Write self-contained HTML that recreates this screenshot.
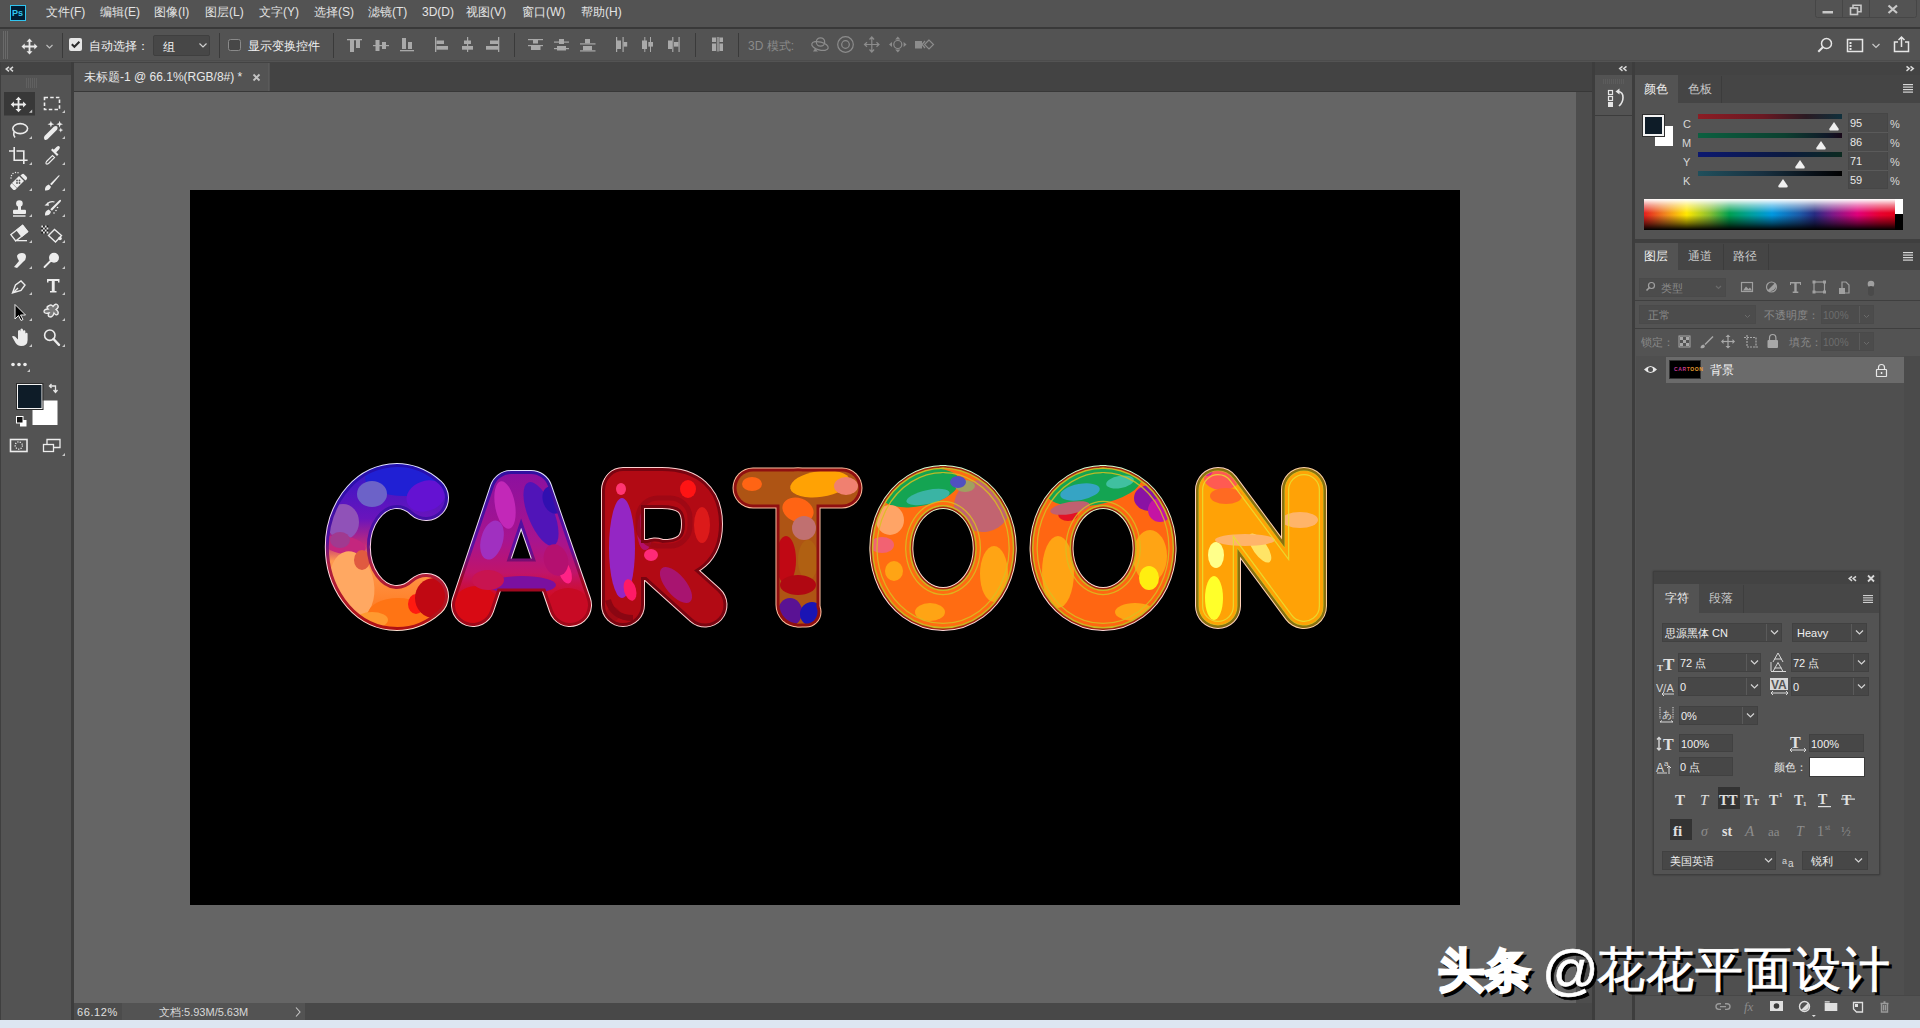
<!DOCTYPE html>
<html><head><meta charset="utf-8">
<style>
*{margin:0;padding:0;box-sizing:border-box}
html,body{width:1920px;height:1028px;overflow:hidden;background:#535353;font-family:"Liberation Sans",sans-serif;color:#e8e8e8}
.a{position:absolute}
.t{position:absolute;white-space:nowrap;font-size:12px;line-height:14px}
svg{position:absolute;overflow:visible}
</style></head>
<body>
<!-- MENU BAR -->
<div class="a" style="left:0;top:0;width:1920px;height:28px;background:#535353"></div>
<div class="a" style="left:0;top:27px;width:1920px;height:2px;background:#393939"></div>
<div class="a" style="left:10px;top:5px;width:16px;height:16px;background:#001d34;border:1px solid #31c5f0"></div>
<div class="t" style="left:12px;top:6px;font-size:9px;color:#31c5f0;font-weight:bold">Ps</div>
<div class="t" style="left:46px;top:5px;color:#e4e4e4">文件(F)</div><div class="t" style="left:100px;top:5px;color:#e4e4e4">编辑(E)</div><div class="t" style="left:154px;top:5px;color:#e4e4e4">图像(I)</div><div class="t" style="left:205px;top:5px;color:#e4e4e4">图层(L)</div><div class="t" style="left:259px;top:5px;color:#e4e4e4">文字(Y)</div><div class="t" style="left:314px;top:5px;color:#e4e4e4">选择(S)</div><div class="t" style="left:368px;top:5px;color:#e4e4e4">滤镜(T)</div><div class="t" style="left:422px;top:5px;color:#e4e4e4">3D(D)</div><div class="t" style="left:466px;top:5px;color:#e4e4e4">视图(V)</div><div class="t" style="left:522px;top:5px;color:#e4e4e4">窗口(W)</div><div class="t" style="left:581px;top:5px;color:#e4e4e4">帮助(H)</div>

<!-- OPTIONS BAR -->
<div class="a" style="left:0;top:29px;width:1920px;height:33px;background:#535353"></div>

<!-- TAB ROW -->
<div class="a" style="left:74px;top:62px;width:1518px;height:30px;background:#434343"></div>
<div class="a" style="left:74px;top:63px;width:196px;height:29px;background:#535353"></div>
<div class="a" style="left:73px;top:91px;width:1519px;height:1px;background:#383838"></div><div class="a" style="left:268px;top:63px;width:1px;height:28px;background:#5a5a5a"></div><div class="a" style="left:0;top:60px;width:1920px;height:1px;background:#4c4c4c"></div>

<!-- PASTEBOARD -->
<div class="a" style="left:74px;top:92px;width:1502px;height:911px;background:#656565"></div>
<div class="a" style="left:1576px;top:92px;width:16px;height:911px;background:#4d4d4d"></div>
<div class="a" style="left:190px;top:190px;width:1270px;height:715px;background:#000"></div>

<!-- LETTERS --><svg width="1920" height="1028" style="left:0;top:0" viewBox="0 0 1920 1028"><defs>
<linearGradient id="gC" x1="0" y1="0" x2="0" y2="1"><stop offset="0" stop-color="#e0e0ff"/><stop offset=".5" stop-color="#ffd0e8"/><stop offset="1" stop-color="#ffe0d0"/></linearGradient>
<linearGradient id="gA" x1="0" y1="0" x2="0" y2="1"><stop offset="0" stop-color="#e0e0ff"/><stop offset="1" stop-color="#ffd8d8"/></linearGradient>
<linearGradient id="gO" x1="0" y1="0" x2="0" y2="1"><stop offset="0" stop-color="#d0ffd0"/><stop offset=".5" stop-color="#ffe0c0"/><stop offset="1" stop-color="#ffd8d8"/></linearGradient>
<linearGradient id="dC" gradientUnits="userSpaceOnUse" x1="0" y1="463" x2="0" y2="632"><stop offset="0" stop-color="#2010b0"/><stop offset=".45" stop-color="#5010a0"/><stop offset=".6" stop-color="#b02040"/><stop offset="1" stop-color="#b01010"/></linearGradient>
<linearGradient id="bC" gradientUnits="userSpaceOnUse" x1="0" y1="463" x2="0" y2="632"><stop offset="0" stop-color="#3018c8"/><stop offset=".33" stop-color="#6a14bc"/><stop offset=".48" stop-color="#c02a7a"/><stop offset=".58" stop-color="#ff9a50"/><stop offset="1" stop-color="#ff7010"/></linearGradient>
<linearGradient id="bA" gradientUnits="userSpaceOnUse" x1="0" y1="470" x2="0" y2="628"><stop offset="0" stop-color="#8a10a0"/><stop offset=".45" stop-color="#a8148e"/><stop offset=".65" stop-color="#c0146a"/><stop offset=".8" stop-color="#d00c24"/><stop offset="1" stop-color="#c80a18"/></linearGradient>
<linearGradient id="dA" gradientUnits="userSpaceOnUse" x1="0" y1="470" x2="0" y2="628"><stop offset="0" stop-color="#3010a0"/><stop offset=".5" stop-color="#6010a0"/><stop offset=".7" stop-color="#a00820"/><stop offset="1" stop-color="#a00818"/></linearGradient>
<linearGradient id="gN" x1="0" y1="0" x2="1" y2="0"><stop offset="0" stop-color="#ffd0c0"/><stop offset="1" stop-color="#ffd0a0"/></linearGradient>
<mask id="mC" maskUnits="userSpaceOnUse" x="300" y="440" width="1060" height="220"><path d="M426 498 A49 61 0 1 0 426 596" fill="none" stroke="#fff" stroke-width="38" stroke-linecap="round" stroke-linejoin="round"/></mask>
<mask id="mA" maskUnits="userSpaceOnUse" x="300" y="440" width="1060" height="220"><path d="M473 605 L511 492 L531 492 L570 605" fill="none" stroke="#fff" stroke-width="36" stroke-linecap="round" stroke-linejoin="round"/><path d="M490 575 L553 575" fill="none" stroke="#fff" stroke-width="27" stroke-linecap="round" stroke-linejoin="round"/></mask>
<mask id="mR" maskUnits="userSpaceOnUse" x="300" y="440" width="1060" height="220"><path d="M623 490 L623 605" fill="none" stroke="#fff" stroke-width="36" stroke-linecap="round" stroke-linejoin="round"/><path d="M623 488 L662 488 Q702 488 702 524 Q702 560 662 560 L623 560" fill="none" stroke="#fff" stroke-width="34" stroke-linecap="round" stroke-linejoin="round"/><path d="M655 560 L705 605" fill="none" stroke="#fff" stroke-width="37" stroke-linecap="round" stroke-linejoin="round"/></mask>
<mask id="mT" maskUnits="userSpaceOnUse" x="300" y="440" width="1060" height="220"><path d="M753 488 L842 488" fill="none" stroke="#fff" stroke-width="33" stroke-linecap="round" stroke-linejoin="round"/><path d="M798 490 L798 605" fill="none" stroke="#fff" stroke-width="37" stroke-linecap="round" stroke-linejoin="round"/><path d="M800 612 L806 612" fill="none" stroke="#fff" stroke-width="23" stroke-linecap="round" stroke-linejoin="round"/></mask>
<mask id="mO1" maskUnits="userSpaceOnUse" x="300" y="440" width="1060" height="220"><path d="M943 487 A51.7 61 0 1 0 943.1 487" fill="none" stroke="#fff" stroke-width="36" stroke-linecap="round" stroke-linejoin="round"/></mask>
<mask id="rO1" maskUnits="userSpaceOnUse" x="300" y="440" width="1060" height="220"><path d="M943 487 A51.7 61 0 1 0 943.1 487" fill="none" stroke="#fff" stroke-width="30" stroke-linecap="round" stroke-linejoin="round"/><path d="M943 487 A51.7 61 0 1 0 943.1 487" fill="none" stroke="#000" stroke-width="27.5" stroke-linecap="round" stroke-linejoin="round"/></mask>
<mask id="mO2" maskUnits="userSpaceOnUse" x="300" y="440" width="1060" height="220"><path d="M1103 487 A51.5 61 0 1 0 1103.1 487" fill="none" stroke="#fff" stroke-width="36" stroke-linecap="round" stroke-linejoin="round"/></mask>
<mask id="rO2" maskUnits="userSpaceOnUse" x="300" y="440" width="1060" height="220"><path d="M1103 487 A51.5 61 0 1 0 1103.1 487" fill="none" stroke="#fff" stroke-width="30" stroke-linecap="round" stroke-linejoin="round"/><path d="M1103 487 A51.5 61 0 1 0 1103.1 487" fill="none" stroke="#000" stroke-width="27.5" stroke-linecap="round" stroke-linejoin="round"/></mask>
<mask id="mN" maskUnits="userSpaceOnUse" x="300" y="440" width="1060" height="220"><path d="M1218 606 L1218 490 L1304 606 L1304 490" fill="none" stroke="#fff" stroke-width="38" stroke-linecap="round" stroke-linejoin="round"/></mask>
<mask id="rN" maskUnits="userSpaceOnUse" x="300" y="440" width="1060" height="220"><path d="M1218 606 L1218 490 L1304 606 L1304 490" fill="none" stroke="#fff" stroke-width="32" stroke-linecap="round" stroke-linejoin="round"/><path d="M1218 606 L1218 490 L1304 606 L1304 490" fill="none" stroke="#000" stroke-width="29.5" stroke-linecap="round" stroke-linejoin="round"/></mask>
</defs>
<g id="LC"><path d="M426 498 A49 61 0 1 0 426 596" fill="none" stroke="url(#gC)" stroke-width="46" stroke-linecap="round" stroke-linejoin="round"/><path d="M426 498 A49 61 0 1 0 426 596" fill="none" stroke="url(#dC)" stroke-width="44" stroke-linecap="round" stroke-linejoin="round"/><g mask="url(#mC)"><rect x="300" y="440" width="1060" height="220" fill="url(#bC)"/><ellipse cx="405" cy="478" rx="40" ry="18" fill="#2020d4"/><ellipse cx="372" cy="494" rx="15" ry="13" fill="#6c62c8"/><ellipse cx="426" cy="496" rx="20" ry="15" fill="#6412d2" transform="rotate(-20 426 496)"/><ellipse cx="343" cy="522" rx="16" ry="18" fill="#9052b8"/><ellipse cx="344" cy="545" rx="22" ry="9" fill="#c4267e" transform="rotate(10 344 545)"/><ellipse cx="352" cy="585" rx="22" ry="34" fill="#ffa862" transform="rotate(-10 352 585)"/><ellipse cx="398" cy="614" rx="30" ry="16" fill="#ff7414"/><ellipse cx="416" cy="604" rx="8" ry="10" fill="#ff1a10"/><ellipse cx="434" cy="598" rx="19" ry="20" fill="#c00812"/><ellipse cx="372" cy="620" rx="16" ry="8" fill="#ff9a30"/><ellipse cx="362" cy="560" rx="8" ry="10" fill="#e05a40"/><ellipse cx="340" cy="540" rx="10" ry="8" fill="#a03a90"/></g></g>
<g id="LA"><path d="M473 605 L511 492 L531 492 L570 605" fill="none" stroke="url(#gA)" stroke-width="44" stroke-linecap="round" stroke-linejoin="round"/><path d="M490 575 L553 575" fill="none" stroke="url(#gA)" stroke-width="35" stroke-linecap="round" stroke-linejoin="round"/><path d="M473 605 L511 492 L531 492 L570 605" fill="none" stroke="url(#dA)" stroke-width="42" stroke-linecap="round" stroke-linejoin="round"/><path d="M490 575 L553 575" fill="none" stroke="url(#dA)" stroke-width="33" stroke-linecap="round" stroke-linejoin="round"/><g mask="url(#mA)"><rect x="300" y="440" width="1060" height="220" fill="url(#bA)"/><ellipse cx="541" cy="514" rx="13" ry="34" fill="#5014b8" transform="rotate(-22 541 514)"/><ellipse cx="553" cy="500" rx="10" ry="14" fill="#3010b0" transform="rotate(-20 553 500)"/><ellipse cx="505" cy="505" rx="10" ry="24" fill="#c228b8" transform="rotate(-10 505 505)"/><ellipse cx="492" cy="540" rx="11" ry="20" fill="#a030c0" transform="rotate(15 492 540)"/><ellipse cx="522" cy="585" rx="34" ry="9" fill="#7a10a0"/><ellipse cx="565" cy="572" rx="6" ry="12" fill="#ff2286" transform="rotate(-20 565 572)"/><ellipse cx="476" cy="608" rx="24" ry="22" fill="#d80a14"/><ellipse cx="568" cy="608" rx="22" ry="20" fill="#c80a24"/><ellipse cx="488" cy="580" rx="16" ry="10" fill="#c81450"/><ellipse cx="556" cy="560" rx="12" ry="16" fill="#b41070" transform="rotate(-15 556 560)"/></g></g>
<g id="LR"><path d="M623 490 L623 605" fill="none" stroke="#ffd0d0" stroke-width="44" stroke-linecap="round" stroke-linejoin="round"/><path d="M623 488 L662 488 Q702 488 702 524 Q702 560 662 560 L623 560" fill="none" stroke="#ffd0d0" stroke-width="42" stroke-linecap="round" stroke-linejoin="round"/><path d="M655 560 L705 605" fill="none" stroke="#ffd0d0" stroke-width="45" stroke-linecap="round" stroke-linejoin="round"/><path d="M623 490 L623 605" fill="none" stroke="#7a0410" stroke-width="42" stroke-linecap="round" stroke-linejoin="round"/><path d="M623 488 L662 488 Q702 488 702 524 Q702 560 662 560 L623 560" fill="none" stroke="#7a0410" stroke-width="40" stroke-linecap="round" stroke-linejoin="round"/><path d="M655 560 L705 605" fill="none" stroke="#7a0410" stroke-width="43" stroke-linecap="round" stroke-linejoin="round"/><path d="M623 490 L623 605" fill="none" stroke="#ff5a5a" stroke-width="34" stroke-linecap="round" stroke-linejoin="round"/><path d="M623 488 L662 488 Q702 488 702 524 Q702 560 662 560 L623 560" fill="none" stroke="#ff5a5a" stroke-width="32" stroke-linecap="round" stroke-linejoin="round"/><path d="M655 560 L705 605" fill="none" stroke="#ff5a5a" stroke-width="35" stroke-linecap="round" stroke-linejoin="round"/><g mask="url(#mR)"><rect x="300" y="440" width="1060" height="220" fill="#b20a14"/><ellipse cx="622" cy="548" rx="13" ry="50" fill="#9426c4"/><ellipse cx="688" cy="489" rx="8" ry="9" fill="#ff1414"/><ellipse cx="621" cy="489" rx="5" ry="6" fill="#ff3672"/><ellipse cx="651" cy="555" rx="7" ry="6" fill="#ff2a78"/><ellipse cx="630" cy="590" rx="6" ry="11" fill="#ff1a66" transform="rotate(-15 630 590)"/><ellipse cx="702" cy="525" rx="8" ry="18" fill="#dc1a1a"/><ellipse cx="613" cy="614" rx="7" ry="7" fill="#a00a14"/><ellipse cx="676" cy="585" rx="10" ry="22" fill="#a81470" transform="rotate(-40 676 585)"/><ellipse cx="645" cy="530" rx="8" ry="20" fill="#b4106a"/><rect x="638" y="498" width="52" height="48" rx="20" fill="none" stroke="#9a0814" stroke-width="5" opacity=".8"/><path d="M608 600 q5 18 25 18" stroke="#8a0612" stroke-width="6" fill="none"/></g></g>
<g id="LT"><path d="M753 488 L842 488" fill="none" stroke="#ffc0a0" stroke-width="41" stroke-linecap="round" stroke-linejoin="round"/><path d="M798 490 L798 605" fill="none" stroke="#ffc0a0" stroke-width="45" stroke-linecap="round" stroke-linejoin="round"/><path d="M800 612 L806 612" fill="none" stroke="#ffc0a0" stroke-width="31" stroke-linecap="round" stroke-linejoin="round"/><path d="M753 488 L842 488" fill="none" stroke="#901010" stroke-width="39" stroke-linecap="round" stroke-linejoin="round"/><path d="M798 490 L798 605" fill="none" stroke="#901010" stroke-width="43" stroke-linecap="round" stroke-linejoin="round"/><path d="M800 612 L806 612" fill="none" stroke="#901010" stroke-width="29" stroke-linecap="round" stroke-linejoin="round"/><g mask="url(#mT)"><rect x="300" y="440" width="1060" height="220" fill="#ae5414"/><ellipse cx="820" cy="484" rx="30" ry="13" fill="#ffa204" transform="rotate(-8 820 484)"/><ellipse cx="846" cy="486" rx="12" ry="9" fill="#f08070"/><ellipse cx="752" cy="484" rx="10" ry="7" fill="#ff6414"/><ellipse cx="798" cy="510" rx="16" ry="12" fill="#ff6414" transform="rotate(20 798 510)"/><ellipse cx="804" cy="528" rx="12" ry="12" fill="#c07070"/><ellipse cx="786" cy="560" rx="10" ry="24" fill="#c00814"/><ellipse cx="808" cy="560" rx="10" ry="20" fill="#b06012"/><ellipse cx="798" cy="585" rx="18" ry="10" fill="#b00812"/><ellipse cx="790" cy="612" rx="12" ry="14" fill="#5a1294"/><ellipse cx="812" cy="614" rx="12" ry="12" fill="#1a14b4"/></g></g>
<g id="LO1"><path d="M943 487 A51.7 61 0 1 0 943.1 487" fill="none" stroke="url(#gO)" stroke-width="44" stroke-linecap="round" stroke-linejoin="round"/><path d="M943 487 A51.7 61 0 1 0 943.1 487" fill="none" stroke="#a02810" stroke-width="42" stroke-linecap="round" stroke-linejoin="round"/><path d="M943 487 A51.7 61 0 1 0 943.1 487" fill="none" stroke="#c8b820" stroke-width="39" stroke-linecap="round" stroke-linejoin="round"/><g mask="url(#mO1)"><rect x="300" y="440" width="1060" height="220" fill="#ff6c12"/><ellipse cx="920" cy="488" rx="40" ry="18" fill="#14a452" transform="rotate(-12 920 488)"/><ellipse cx="928" cy="497" rx="22" ry="7" fill="#3ab4a4" transform="rotate(-12 928 497)"/><ellipse cx="982" cy="506" rx="28" ry="26" fill="#c26470" transform="rotate(10 982 506)"/><ellipse cx="890" cy="520" rx="14" ry="15" fill="#ffa466"/><ellipse cx="882" cy="545" rx="12" ry="8" fill="#f26272"/><ellipse cx="994" cy="574" rx="14" ry="28" fill="#ffa414"/><ellipse cx="930" cy="612" rx="15" ry="9" fill="#ffa414"/><ellipse cx="894" cy="571" rx="9" ry="10" fill="#ffa414"/><ellipse cx="965" cy="486" rx="10" ry="6" fill="#a0a060"/><ellipse cx="958" cy="482" rx="8" ry="6" fill="#5050c0"/></g><rect x="300" y="440" width="1060" height="220" fill="#d8c020" mask="url(#rO1)" opacity="0.85"/></g>
<g id="LO2"><path d="M1103 487 A51.5 61 0 1 0 1103.1 487" fill="none" stroke="url(#gO)" stroke-width="44" stroke-linecap="round" stroke-linejoin="round"/><path d="M1103 487 A51.5 61 0 1 0 1103.1 487" fill="none" stroke="#a02810" stroke-width="42" stroke-linecap="round" stroke-linejoin="round"/><path d="M1103 487 A51.5 61 0 1 0 1103.1 487" fill="none" stroke="#c8b820" stroke-width="39" stroke-linecap="round" stroke-linejoin="round"/><g mask="url(#mO2)"><rect x="300" y="440" width="1060" height="220" fill="#ff6612"/><ellipse cx="1094" cy="486" rx="48" ry="19" fill="#14a452" transform="rotate(-10 1094 486)"/><ellipse cx="1080" cy="492" rx="20" ry="8" fill="#36a4c4" transform="rotate(-10 1080 492)"/><ellipse cx="1120" cy="482" rx="14" ry="6" fill="#40c0a0" transform="rotate(-10 1120 482)"/><ellipse cx="1150" cy="498" rx="16" ry="13" fill="#8a12a4"/><ellipse cx="1160" cy="510" rx="12" ry="12" fill="#c414a4"/><ellipse cx="1058" cy="572" rx="16" ry="36" fill="#ffa414"/><ellipse cx="1150" cy="556" rx="17" ry="26" fill="#ffa414"/><ellipse cx="1149" cy="578" rx="10" ry="12" fill="#ffee10"/><ellipse cx="1135" cy="612" rx="20" ry="9" fill="#ffa414"/><ellipse cx="1068" cy="514" rx="10" ry="7" fill="#e41224"/><ellipse cx="1070" cy="508" rx="20" ry="6" fill="#c06070" transform="rotate(-10 1070 508)"/></g><rect x="300" y="440" width="1060" height="220" fill="#d8c020" mask="url(#rO2)" opacity="0.85"/></g>
<g id="LN"><path d="M1218 606 L1218 490 L1304 606 L1304 490" fill="none" stroke="url(#gN)" stroke-width="46" stroke-linecap="round" stroke-linejoin="round"/><path d="M1218 606 L1218 490 L1304 606 L1304 490" fill="none" stroke="#8a7010" stroke-width="44" stroke-linecap="round" stroke-linejoin="round"/><path d="M1218 606 L1218 490 L1304 606 L1304 490" fill="none" stroke="#c8c820" stroke-width="39" stroke-linecap="round" stroke-linejoin="round"/><g mask="url(#mN)"><rect x="300" y="440" width="1060" height="220" fill="#ffa206"/><ellipse cx="1222" cy="478" rx="18" ry="12" fill="#ff5a52"/><ellipse cx="1226" cy="496" rx="16" ry="8" fill="#ff6a22"/><ellipse cx="1216" cy="555" rx="8" ry="13" fill="#ffff8a"/><ellipse cx="1260" cy="548" rx="7" ry="17" fill="#ffe466" transform="rotate(-35 1260 548)"/><ellipse cx="1214" cy="598" rx="9" ry="22" fill="#ffff2a"/><ellipse cx="1300" cy="520" rx="18" ry="8" fill="#ffb46a"/><ellipse cx="1245" cy="540" rx="30" ry="6" fill="#ffb46a"/><ellipse cx="1207" cy="470" rx="6" ry="6" fill="#d020a0"/></g><rect x="300" y="440" width="1060" height="220" fill="#e8e030" mask="url(#rN)" opacity="0.85"/></g></svg><!-- /LETTERS -->
<!-- TOOLS PANEL -->
<div class="a" style="left:0;top:62px;width:71px;height:941px;background:#535353"></div>
<div class="a" style="left:0;top:62px;width:71px;height:13px;background:#434343"></div>
<div class="a" style="left:71px;top:62px;width:3px;height:958px;background:#3d3d3d"></div>

<!-- RIGHT COLUMNS -->
<div class="a" style="left:1592px;top:62px;width:3px;height:958px;background:#3d3d3d"></div>
<div class="a" style="left:1595px;top:62px;width:325px;height:13px;background:#434343"></div>
<div class="a" style="left:1632px;top:62px;width:3px;height:958px;background:#3d3d3d"></div>


<!-- OPTIONS CONTENT -->
<div class="t" style="left:89px;top:39px;color:#f0f0f0">自动选择：</div>
<div class="a" style="left:153px;top:35px;width:57px;height:21px;background:#474747;border:1px solid #3f3f3f;border-radius:2px"></div>
<div class="t" style="left:163px;top:40px;color:#f0f0f0">组</div>
<div class="t" style="left:248px;top:39px;color:#f0f0f0">显示变换控件</div>
<div class="t" style="left:748px;top:39px;color:#8a8a8a">3D 模式:</div>
<svg width="1920" height="1028" style="left:0;top:0" viewBox="0 0 1920 1028">
 <!-- grippers -->
 <g fill="#6a6a6a"><rect x="3" y="31" width="1" height="28"/><rect x="5" y="31" width="1" height="28"/><rect x="7" y="31" width="1" height="28"/></g>
 <!-- move icon -->
 <g fill="#e8e8e8" transform="translate(29.5,46.5)">
  <path d="M-0.9 -5.5 h1.8 v4.6 h4.6 v1.8 h-4.6 v4.6 h-1.8 v-4.6 h-4.6 v-1.8 h4.6z"/>
  <path d="M0 -8 l3 3.2 h-6z M0 8 l3 -3.2 h-6z M-8 0 l3.2 -3 v6z M8 0 l-3.2 -3 v6z"/>
 </g>
 <path d="M46.5 45 l3 3 l3 -3" stroke="#bdbdbd" stroke-width="1.2" fill="none"/>
 <g fill="#3a3a3a"><rect x="62" y="33" width="1" height="25"/><rect x="219" y="33" width="1" height="25"/><rect x="333" y="33" width="1" height="25"/><rect x="514" y="33" width="1" height="24"/><rect x="695" y="33" width="1" height="24"/><rect x="738" y="33" width="1" height="24"/></g>
 <!-- checkbox checked -->
 <rect x="69" y="38" width="13" height="13" rx="2" fill="#e6e6e6"/>
 <path d="M71.8 44.2 l2.6 2.6 l5 -5" stroke="#2b2b2b" stroke-width="2" fill="none"/>
 <!-- dropdown chevron -->
 <path d="M199.5 43.5 l3.5 3.5 l3.5 -3.5" stroke="#d0d0d0" stroke-width="1.2" fill="none"/>
 <!-- checkbox unchecked -->
 <rect x="228.5" y="39.5" width="12" height="11" rx="2" fill="#474747" stroke="#8a8a8a" stroke-width="1"/>
 <!-- align icons -->
 <g fill="#a9a9a9">
  <rect x="347" y="39" width="15" height="1.3"/><rect x="350" y="40" width="4" height="12"/><rect x="356" y="40" width="4" height="8"/>
  <rect x="373" y="45" width="16" height="1.2"/><rect x="375.5" y="40" width="4" height="11"/><rect x="382" y="42" width="4" height="7"/>
  <rect x="400" y="50" width="14" height="1.3"/><rect x="402" y="38" width="4" height="11"/><rect x="408" y="42" width="4" height="7"/>
  <rect x="435" y="37" width="1.3" height="15"/><rect x="436.5" y="40.5" width="7.5" height="3.5"/><rect x="436.5" y="46" width="11.5" height="3.7"/>
  <rect x="467" y="37" width="1.2" height="15"/><rect x="464" y="40.5" width="7" height="3.5"/><rect x="462" y="46" width="11" height="3.7"/>
  <rect x="498" y="37" width="1.3" height="15"/><rect x="490" y="40.5" width="8" height="3.5"/><rect x="486" y="46" width="12" height="3.7"/>
  <rect x="528" y="39" width="15" height="1.2"/><rect x="533" y="40" width="5" height="3.5"/><rect x="528" y="45" width="15" height="1.2"/><rect x="531" y="46" width="9.5" height="4"/>
  <rect x="554" y="41.5" width="15" height="1.2"/><rect x="559" y="39" width="5" height="5"/><rect x="554" y="48" width="15" height="1.2"/><rect x="557" y="46" width="9" height="4.5"/>
  <rect x="585" y="39" width="5" height="4.3"/><rect x="580" y="43.3" width="15.5" height="1.2"/><rect x="583" y="46" width="9" height="4.3"/><rect x="580" y="50.3" width="15.5" height="1.2"/>
  <rect x="616" y="37" width="1.2" height="15"/><rect x="617" y="40.5" width="4" height="8.5"/><rect x="622.5" y="37" width="1.2" height="15"/><rect x="623.5" y="42" width="3.7" height="4.6"/>
  <rect x="642" y="40.5" width="5" height="8.5"/><rect x="644.3" y="37" width="1" height="15"/><rect x="648.3" y="42" width="4.7" height="4.6"/><rect x="650" y="37" width="1" height="15"/>
  <rect x="668" y="40.5" width="4" height="8.5"/><rect x="672.2" y="37" width="1.2" height="15"/><rect x="674" y="42" width="4.5" height="4.6"/><rect x="678.5" y="37" width="1.2" height="15"/>
  <rect x="712" y="37.5" width="4" height="4.5"/><rect x="719.5" y="37.5" width="3.5" height="4.5"/><rect x="712" y="43.5" width="4" height="7.5"/><rect x="719.5" y="43.5" width="3.5" height="7.5"/><rect x="716.8" y="37" width="0.9" height="14.5"/><rect x="718.3" y="37" width="0.9" height="14.5"/>
 </g>
 <!-- 3D icons -->
 <g stroke="#8c8c8c" fill="none" stroke-width="1.2">
  <circle cx="820.5" cy="42" r="4.2"/><ellipse cx="820" cy="46" rx="8.5" ry="4" transform="rotate(15 820 46)"/>
  <circle cx="845.5" cy="44.5" r="7.8"/><circle cx="845.5" cy="44.5" r="3.8"/>
  <path d="M871.8 37 v15 M864.5 44.5 h15 M869.5 39.5 l2.3 -2.5 l2.3 2.5 M869.5 49.5 l2.3 2.5 l2.3 -2.5 M867 42.2 l-2.5 2.3 l2.5 2.3 M876.5 42.2 l2.5 2.3 l-2.5 2.3"/>
  <circle cx="897.8" cy="44.5" r="4"/>
  <path d="M925 41 l-3 3.5 l3 3.5 M929 40 l-4.5 4.5 l4.5 4.5 l4.5 -4.5z"/>
 </g>
 <g fill="#8c8c8c">
  <path d="M897.8 36.5 l2.6 3 h-5.2z M897.8 52.5 l2.6 -3 h-5.2z M889 44.5 l3 -2.6 v5.2z M906.6 44.5 l-3 -2.6 v5.2z"/>
  <rect x="915" y="41" width="7" height="7.5"/>
  <path d="M815 48.5 l3 3 h-5z"/>
 </g>
</svg>


<div class="a" style="left:0;top:62px;width:1px;height:958px;background:#3f3f3f"></div>
<!-- TOOLS ICONS -->
<svg width="80" height="470" style="left:0;top:0" viewBox="0 0 80 470">
 <path d="M9 66.8 l-2.8 2.3 l2.8 2.3 M13 66.8 l-2.8 2.3 l2.8 2.3" fill="none" stroke="#d8d8d8" stroke-width="1.5"/>
 <g fill="#606060"><rect x="26" y="78" width="1" height="10"/><rect x="28" y="78" width="1" height="10"/><rect x="30" y="78" width="1" height="10"/><rect x="32" y="78" width="1" height="10"/><rect x="34" y="78" width="1" height="10"/><rect x="36" y="78" width="1" height="10"/></g>
 <rect x="4" y="92" width="31" height="23.5" fill="#383838"/>
 <g fill="#c8c8c8">
  <path d="M29 112.8 h3.2 v-3.2z M62 113 h3 v-3z M29 139 h3 v-3z M62 139 h3 v-3z M29 165 h3 v-3z M62 165 h3 v-3z M29 191 h3 v-3z M62 191 h3 v-3z M29 217 h3 v-3z M62 217 h3 v-3z M29 243 h3 v-3z M62 243 h3 v-3z M29 269 h3 v-3z M62 269 h3 v-3z M29 295 h3 v-3z M62 295 h3 v-3z M29 321 h3 v-3z M62 321 h3 v-3z M29 347 h3 v-3z M62 347 h3 v-3z M27 372 h3 v-3z M62 456 h3 v-3z"/>
 </g>
 <g fill="#ececec">
  <g transform="translate(18.5,104.5)"><path d="M-0.9 -5.5 h1.8 v4.6 h4.6 v1.8 h-4.6 v4.6 h-1.8 v-4.6 h-4.6 v-1.8 h4.6z"/><path d="M0 -7.8 l3 3.2 h-6z M0 7.8 l3 -3.2 h-6z M-7.8 0 l3.2 -3 v6z M7.8 0 l-3.2 -3 v6z"/></g>
 </g>
 <g stroke="#ececec" fill="none" stroke-width="1.6">
  <rect x="44.5" y="97.5" width="15" height="12" stroke-dasharray="3.5 2.2"/>
  <ellipse cx="20.2" cy="128.6" rx="7.4" ry="5"/>
  <path d="M14 132 q-1 3 1 5.5"/>
  <path d="M9 151 h5 M14.2 147 v13.2 h13.4 M16.5 151 h7.3 v13"/>
  
  
  <path d="M13 216 h12.5" stroke-width="1.4"/>
  
  <path d="M48.5 235.5 l6 -6 l7 6 l-6 6.5z" stroke-width="1.4"/>
  <path d="M44.5 267 l6 -6" stroke-width="1.8" stroke-linecap="round"/>
  <path d="M12.5 293 l3 -8 l5.5 -4 l4 4 l-4 5.5 z M13 293 l5 -5" stroke-width="1.4"/>
  <circle cx="49.8" cy="335.2" r="5.2" stroke-width="1.6"/>
  <path d="M53.5 339 l5.5 5.8" stroke-width="2.4" stroke-linecap="round"/>
  <rect x="10.5" y="439.5" width="16.5" height="12"/>
  <circle cx="18.8" cy="445.5" r="3.6" stroke-dasharray="1.2 1.3" stroke-width="1.3"/>
  <rect x="43.5" y="444.5" width="10" height="7" stroke-width="1.3"/>
  <path d="M47 444.5 v-5 h13 v8 h-6.5" stroke-width="1.3"/>
 </g>
 <g fill="#ececec">
  
  
  
  
  
  
  <circle cx="19.4" cy="203.6" r="3.3"/><rect x="18" y="205" width="3" height="5"/><rect x="13" y="209.8" width="13" height="4.2" rx="1"/>
  
  
  
  
  <circle cx="60" cy="238.5" r="1.8"/>
  <path d="M14 267 l5 -6 q-2 -3 -2 -5 q1 -3 5 -3 q4 0 4 4 q0 3 -3 5 l-6 6z"/>
  <circle cx="54" cy="257.8" r="5"/>
  <path d="M47 279 h12.5 v3.5 h-1.5 v-1.5 h-3.3 v10 h1.8 v1.5 h-6.5 v-1.5 h1.8 v-10 h-3.3 v1.5 h-1.5z"/>
  <path d="M15 304.5 v14.5 l3.5 -3.5 l2.5 5 l2 -1 l-2.5 -4.5 h5z" stroke="#ececec" stroke-width="1" fill="#000"/>
  <path d="M48 306.5 q3 -3 5 0 q3 -4 5 -1 q1 2 -2 4 q3 2 2 4.5 q-2 2 -4 -1 q-1 4 -4 4 q-3 -1 -1 -4 q-4 1 -5 -1 q0 -3 4 -3 q-2 -2 0 -3z" stroke="#ececec" stroke-width="1.3" fill="#7a7a7a"/>
  <path d="M12 336.5 q1 -1 3 0 l3 3 v-8 q0 -1.5 1.2 -1.5 q1.2 0 1.2 1.5 v6 v-7.5 q0 -1.5 1.3 -1.5 q1.3 0 1.3 1.5 v7.5 v-6 q0 -1.3 1.2 -1.3 q1.2 0 1.2 1.3 v6 v-3.5 q0 -1.2 1.1 -1.2 q1.1 0 1.1 1.2 v6 q0 6 -6.5 6 q-3.5 0 -5.5 -3z"/>
  <circle cx="13" cy="364.5" r="1.8"/><circle cx="19" cy="364.5" r="1.8"/><circle cx="25" cy="364.5" r="1.8"/>
 </g>
 <!-- colors -->
 <rect x="32.5" y="400.5" width="25" height="24.5" fill="#fff"/>
 <rect x="17.5" y="384.5" width="24.5" height="24" fill="#0e1c28" stroke="#f4f4f4" stroke-width="1"/>
 <rect x="16.5" y="383.5" width="26.5" height="26" fill="none" stroke="#2c2c2c" stroke-width="1"/>
 <g fill="none" stroke="#e6e6e6" stroke-width="1.3"><path d="M50 386 h5.5 v6 M53.5 390 l2 2.5 l2 -2.5 M51.5 384 l-2 2 l2 2"/></g>
 <rect x="20" y="420" width="6.5" height="6.5" fill="#fff"/><rect x="16.5" y="416.5" width="6.5" height="6.5" fill="#111" stroke="#fff" stroke-width="1"/>
</svg>

<svg width="80" height="470" style="left:0;top:0" viewBox="0 0 80 470">
 <g fill="#ececec">
  <path d="M50.9 120.8 l0.9 2.5 l2.5 0.9 l-2.5 0.9 l-0.9 2.5 l-0.9 -2.5 l-2.5 -0.9 l2.5 -0.9z"/>
  <path d="M59.6 120.8 l0.9 2.5 l2.5 0.9 l-2.5 0.9 l-0.9 2.5 l-0.9 -2.5 l-2.5 -0.9 l2.5 -0.9z"/>
  <path d="M60.8 127.6 l0.7 1.8 l1.8 0.7 l-1.8 0.7 l-0.7 1.8 l-0.7 -1.8 l-1.8 -0.7 l1.8 -0.7z"/>
  <path d="M44.5 136 l9.5 -9.5 q2.2 -1.2 3.2 0 q1 1.2 -0.2 3.2 l-9.5 9.5 q-2 1.5 -3 0.3 q-1.2 -1.5 0 -3.5z"/>
  <path d="M53.5 150 l3 -3 q2 -1.5 3 -0.5 q1 1 -0.5 3 l-3 3z M51 150 l1.5 -1.5 l6 6 l-1.5 1.5z"/>
  <path d="M12 183 l7 -7 l5 5 l-7 7z"/>
  <path d="M10.6 184.4 l1.2 -1.2 l5 5 l-1.2 1.2 q-1.5 1.2 -2.7 0 l-2.3 -2.3 q-1.2 -1.2 0 -2.7z"/>
  <path d="M20.4 175.6 l1.2 -1.2 q1.5 -1.2 2.7 0 l2.3 2.3 q1.2 1.2 0 2.7 l-1.2 1.2z"/>
  <path d="M45 190.5 q-0.5 -4.5 3.8 -6 l2.2 2.2 q-1.5 4.3 -6 3.8z M50 184 l8.5 -8.5 q1 -0.6 1.2 0.3 l-8 9.5z"/>
 </g>
 <g fill="#535353"><circle cx="17" cy="180.5" r="0.9"/><circle cx="19.5" cy="180.5" r="0.9"/><circle cx="17" cy="183" r="0.9"/><circle cx="19.5" cy="183" r="0.9"/></g>
 <g fill="#ececec"><circle cx="11" cy="178" r="0.7"/><circle cx="11.5" cy="175.5" r="0.7"/><circle cx="13" cy="173.5" r="0.7"/><circle cx="15.5" cy="172.5" r="0.7"/><circle cx="18" cy="172.8" r="0.7"/></g>
 <path d="M46.5 161.5 l6 -6 l2 2 l-6 6 q-1.5 1 -2.3 0.3 q-0.7 -0.8 0.3 -2.3z" fill="none" stroke="#ececec" stroke-width="1.2"/>
</svg>

<svg width="80" height="470" style="left:0;top:0" viewBox="0 0 80 470">
 <g transform="translate(19.2 233.2) rotate(-38)"><rect x="-7.5" y="-4" width="15" height="8" fill="none" stroke="#ececec" stroke-width="1.3"/><rect x="-0.5" y="-4.6" width="8.6" height="9.2" fill="#ececec"/></g>
 <rect x="17" y="240" width="10" height="1.3" fill="#ececec"/>
 <g fill="#ececec">
  <path d="M45 215.5 q-0.5 -4.5 3.8 -6 l2.2 2.2 q-1.5 4.3 -6 3.8z M50.3 209.2 l8.8 -8.8 q1.2 -0.9 1.7 -0.3 q0.6 0.6 -0.3 1.7 l-8.6 9z"/>
  <path d="M44.5 205.5 l3.5 -3.2 l1 3.5z"/>
  <circle cx="57.5" cy="207.5" r="0.8"/><circle cx="56" cy="210.5" r="0.8"/><circle cx="54" cy="213" r="0.8"/>
 </g>
 <path d="M47.5 203.5 q3 -2.5 7 -1.5" fill="none" stroke="#ececec" stroke-width="1.2"/>
 <rect x="41.3" y="225.5" width="7" height="8" fill="#1c1c1c"/>
 <g fill="#e8e8e8"><rect x="41.3" y="225.5" width="1.75" height="2"/><rect x="44.8" y="225.5" width="1.75" height="2"/><rect x="43.05" y="227.5" width="1.75" height="2"/><rect x="46.55" y="227.5" width="1.75" height="2"/><rect x="41.3" y="229.5" width="1.75" height="2"/><rect x="44.8" y="229.5" width="1.75" height="2"/><rect x="43.05" y="231.5" width="1.75" height="2"/><rect x="46.55" y="231.5" width="1.75" height="2"/></g>
</svg>
<div class="t" style="left:84px;top:70px;color:#e8e8e8">未标题-1 @ 66.1%(RGB/8#) *</div>
<svg width="10" height="10" style="left:252px;top:73px" viewBox="0 0 10 10"><path d="M1.5 1.5 l6 6 M7.5 1.5 l-6 6" stroke="#c4c4c4" stroke-width="1.8"/></svg>


<!-- RIGHT PANELS -->
<div class="a" style="left:1595px;top:75px;width:37px;height:40px;background:#535353"></div>
<div class="a" style="left:1595px;top:115px;width:37px;height:1px;background:#3c3c3c"></div>
<div class="a" style="left:1595px;top:116px;width:37px;height:904px;background:#535353"></div>
<div class="a" style="left:1635px;top:75px;width:285px;height:28px;background:#454545"></div>
<div class="a" style="left:1635px;top:75px;width:43px;height:28px;background:#535353"></div>
<div class="a" style="left:1721px;top:76px;width:1px;height:27px;background:#3c3c3c"></div>
<div class="a" style="left:1635px;top:103px;width:285px;height:136px;background:#535353"></div>
<div class="a" style="left:1635px;top:239px;width:285px;height:4px;background:#3f3f3f"></div>
<div class="a" style="left:1635px;top:243px;width:285px;height:27px;background:#454545"></div>
<div class="a" style="left:1635px;top:243px;width:43px;height:27px;background:#535353"></div>
<div class="a" style="left:1723px;top:244px;width:1px;height:26px;background:#3c3c3c"></div>
<div class="a" style="left:1768px;top:244px;width:1px;height:26px;background:#3c3c3c"></div>
<div class="a" style="left:1635px;top:270px;width:285px;height:750px;background:#535353"></div>
<div class="a" style="left:1635px;top:300px;width:285px;height:1px;background:#3f3f3f"></div>
<div class="a" style="left:1635px;top:328px;width:285px;height:1px;background:#3f3f3f"></div>
<div class="a" style="left:1636px;top:356px;width:268px;height:639px;background:#4f4f4f"></div>
<div class="a" style="left:1904px;top:356px;width:16px;height:639px;background:#4b4b4b"></div>
<div class="a" style="left:1666px;top:357px;width:238px;height:26px;background:#6b6b6b"></div>
<div class="a" style="left:1635px;top:995px;width:285px;height:25px;background:#535353"></div>
<div class="a" style="left:1635px;top:995px;width:285px;height:1px;background:#474747"></div>
<div class="t" style="left:1644px;top:82px;color:#f0f0f0">颜色</div>
<div class="t" style="left:1688px;top:82px;color:#c8c8c8">色板</div>
<div class="t" style="left:1683px;top:117px;font-size:11px;color:#d8d8d8">C</div>
<div class="t" style="left:1682px;top:136px;font-size:11px;color:#d8d8d8">M</div>
<div class="t" style="left:1683px;top:155px;font-size:11px;color:#d8d8d8">Y</div>
<div class="t" style="left:1683px;top:174px;font-size:11px;color:#d8d8d8">K</div>
<div class="a" style="left:1848px;top:113px;width:40px;height:76px;background:#4a4a4a;border:1px solid #464646"></div>
<div class="a" style="left:1848px;top:132px;width:40px;height:1px;background:#5a5a5a"></div>
<div class="a" style="left:1848px;top:151px;width:40px;height:1px;background:#5a5a5a"></div>
<div class="a" style="left:1848px;top:170px;width:40px;height:1px;background:#5a5a5a"></div>
<div class="t" style="left:1850px;top:116px;font-size:11px;color:#e8e8e8">95</div>
<div class="t" style="left:1850px;top:135px;font-size:11px;color:#e8e8e8">86</div>
<div class="t" style="left:1850px;top:154px;font-size:11px;color:#e8e8e8">71</div>
<div class="t" style="left:1850px;top:173px;font-size:11px;color:#e8e8e8">59</div>
<div class="t" style="left:1890px;top:117px;font-size:11px;color:#d8d8d8">%</div>
<div class="t" style="left:1890px;top:136px;font-size:11px;color:#d8d8d8">%</div>
<div class="t" style="left:1890px;top:155px;font-size:11px;color:#d8d8d8">%</div>
<div class="t" style="left:1890px;top:174px;font-size:11px;color:#d8d8d8">%</div>
<div class="a" style="left:1698px;top:114px;width:144px;height:5px;background:linear-gradient(90deg,#8c1c24,#6a1822 45%,#2a1a22 75%,#10303c)"></div>
<div class="a" style="left:1698px;top:133px;width:144px;height:5px;background:linear-gradient(90deg,#0c6040,#0c4030 60%,#101828 90%,#180818)"></div>
<div class="a" style="left:1698px;top:152px;width:144px;height:5px;background:linear-gradient(90deg,#0c1870,#0c1a40 60%,#0c2a20)"></div>
<div class="a" style="left:1698px;top:171px;width:144px;height:5px;background:linear-gradient(90deg,#20505c,#183040 45%,#081018 80%,#000)"></div>
<div class="a" style="left:1644px;top:199px;width:251px;height:31px;background:linear-gradient(90deg,#e41e1e 0%,#f08020 8%,#ffe800 17%,#8cc030 26%,#00a050 34%,#00a0a0 43%,#0098e0 51%,#1c5aa8 62%,#262a80 68%,#7a1a88 75%,#e0007a 85%,#e80030 94%,#e4001a 100%)"></div>
<div class="a" style="left:1644px;top:199px;width:251px;height:31px;background:linear-gradient(180deg,rgba(255,255,255,1) 0%,rgba(255,255,255,0.5) 20%,rgba(255,255,255,0) 45%,rgba(0,0,0,0) 52%,rgba(0,0,0,.5) 78%,rgba(0,0,0,1) 100%)"></div>
<div class="a" style="left:1895px;top:199px;width:8px;height:15px;background:#fff"></div>
<div class="a" style="left:1895px;top:214px;width:8px;height:16px;background:#000"></div>
<div class="a" style="left:1655px;top:126px;width:18px;height:20px;background:#fff"></div>
<div class="a" style="left:1643px;top:115px;width:21px;height:21px;background:#0e1c28;border:2px solid #f2f2f2;outline:1px solid #2e2e2e"></div>
<div class="t" style="left:1644px;top:249px;color:#f0f0f0">图层</div>
<div class="t" style="left:1688px;top:249px;color:#c8c8c8">通道</div>
<div class="t" style="left:1733px;top:249px;color:#c8c8c8">路径</div>
<div class="a" style="left:1639px;top:278px;width:87px;height:19px;background:#4c4c4c;border:1px solid #4a4a4a"></div>
<div class="t" style="left:1661px;top:281px;font-size:11px;color:#8a8a8a">类型</div>
<div class="a" style="left:1639px;top:305px;width:117px;height:19px;background:#4c4c4c;border:1px solid #4a4a4a"></div>
<div class="t" style="left:1648px;top:308px;font-size:11px;color:#8a8a8a">正常</div>
<div class="t" style="left:1764px;top:308px;font-size:11px;color:#8a8a8a">不透明度：</div>
<div class="a" style="left:1821px;top:305px;width:53px;height:19px;background:#4c4c4c;border:1px solid #4a4a4a"></div>
<div class="a" style="left:1859px;top:306px;width:1px;height:17px;background:#5a5a5a"></div>
<div class="t" style="left:1823px;top:309px;font-size:10px;color:#6c6c6c">100%</div>
<div class="t" style="left:1641px;top:335px;font-size:11px;color:#8a8a8a">锁定：</div>
<div class="t" style="left:1789px;top:335px;font-size:11px;color:#8a8a8a">填充：</div>
<div class="a" style="left:1821px;top:332px;width:53px;height:19px;background:#4c4c4c;border:1px solid #4a4a4a"></div>
<div class="a" style="left:1859px;top:333px;width:1px;height:17px;background:#5a5a5a"></div>
<div class="t" style="left:1823px;top:336px;font-size:10px;color:#6c6c6c">100%</div>
<div class="a" style="left:1669px;top:360px;width:32px;height:19px;background:#000;border:1px solid #333"></div>
<div class="t" style="left:1674px;top:367px;font-size:5px;line-height:5px;font-weight:bold;letter-spacing:0.6px;color:#e06a40"><span style="color:#c83a9a">CAR</span><span style="color:#e0602a">T</span><span style="color:#e8a030">OON</span></div>
<div class="t" style="left:1710px;top:363px;color:#f4f4f4">背景</div>


<svg width="1920" height="1028" style="left:0;top:0" viewBox="0 0 1920 1028">
 <!-- window controls -->
 <rect x="1815.5" y="-1" width="101" height="18.5" rx="2" fill="#535353" stroke="#464646"/>
 <rect x="1842" y="0" width="1" height="17" fill="#464646"/><rect x="1869" y="0" width="1" height="17" fill="#464646"/>
 <rect x="1822.5" y="11" width="10.5" height="2.5" fill="#c8c8c8"/>
 <g fill="none" stroke="#c8c8c8" stroke-width="1.6"><rect x="1850.5" y="8" width="7" height="6.5"/><path d="M1853 7.8 v-2.5 h8 v6.5 h-3.3"/></g>
 <path d="M1888.5 5.5 l8.5 7.5 M1897 5.5 l-8.5 7.5" stroke="#c8c8c8" stroke-width="2.2"/>
 <!-- search/workspace/share -->
 <g fill="none" stroke="#e6e6e6" stroke-width="1.5">
  <circle cx="1826.5" cy="43.5" r="5"/><path d="M1822.8 47.2 l-4.5 4.5" stroke-width="2"/>
  <rect x="1847.5" y="39.5" width="15" height="12"/>
  <path d="M1872.5 44 l3.5 3.5 l3.5 -3.5" stroke-width="1.2" stroke="#c8c8c8"/>
  <path d="M1898 42 h-3.5 v9.5 h14 v-9.5 h-3.5 M1901.5 47 v-10 M1898.5 40 l3 -3 l3 3"/>
 </g>
 <g fill="#e6e6e6"><rect x="1849.5" y="42" width="2" height="2"/><rect x="1849.5" y="45" width="2" height="2"/><rect x="1849.5" y="48" width="2" height="2"/></g>
 <!-- panel header arrows -->
 <path d="M1622.5 66.3 l-2.8 2.3 l2.8 2.3 M1626.5 66.3 l-2.8 2.3 l2.8 2.3" fill="none" stroke="#d8d8d8" stroke-width="1.5"/>
 <path d="M1906.5 66.3 l2.8 2.3 l-2.8 2.3 M1910.5 66.3 l2.8 2.3 l-2.8 2.3" fill="none" stroke="#d8d8d8" stroke-width="1.5"/>
 <!-- history icon -->
 <g fill="none" stroke="#e6e6e6" stroke-width="1.2"><rect x="1608.5" y="90.5" width="4" height="4"/><rect x="1608.5" y="96.5" width="4" height="4"/></g>
 <rect x="1608" y="102" width="5" height="5" fill="#e6e6e6"/>
 <path d="M1618.5 91.5 q4.5 0.5 4.5 6 q0 5 -4 8.5" fill="none" stroke="#e6e6e6" stroke-width="1.6"/><path d="M1615.5 91.5 l4 -3 v6z" fill="#e6e6e6"/>
 <g fill="#5c5c5c"><rect x="1603" y="79" width="1" height="5"/><rect x="1605" y="79" width="1" height="5"/><rect x="1607" y="79" width="1" height="5"/><rect x="1609" y="79" width="1" height="5"/><rect x="1611" y="79" width="1" height="5"/><rect x="1613" y="79" width="1" height="5"/><rect x="1615" y="79" width="1" height="5"/><rect x="1617" y="79" width="1" height="5"/><rect x="1619" y="79" width="1" height="5"/><rect x="1621" y="79" width="1" height="5"/><rect x="1623" y="79" width="1" height="5"/></g>
 <!-- menu icons -->
 <g fill="#d8d8d8">
  <rect x="1903" y="84" width="10" height="1.2"/><rect x="1903" y="86.5" width="10" height="1.2"/><rect x="1903" y="89" width="10" height="1.2"/><rect x="1903" y="91.5" width="10" height="1.2"/>
  <rect x="1903" y="252" width="10" height="1.2"/><rect x="1903" y="254.5" width="10" height="1.2"/><rect x="1903" y="257" width="10" height="1.2"/><rect x="1903" y="259.5" width="10" height="1.2"/>
 </g>
 <!-- slider thumbs -->
 <g fill="#f0f0f0">
  <path d="M1834 122 l-4.5 6.5 q-0.8 2 1.2 2 h6.6 q2 0 1.2 -2z"/>
  <path d="M1821 141 l-4.5 6.5 q-0.8 2 1.2 2 h6.6 q2 0 1.2 -2z"/>
  <path d="M1800 160 l-4.5 6.5 q-0.8 2 1.2 2 h6.6 q2 0 1.2 -2z"/>
  <path d="M1783 179 l-4.5 6.5 q-0.8 2 1.2 2 h6.6 q2 0 1.2 -2z"/>
 </g>
 <!-- layers filter icons -->
 <g fill="none" stroke="#a0a0a0" stroke-width="1.2">
  <circle cx="1651.5" cy="285.5" r="3"/><path d="M1649.5 287.5 l-3 3" stroke-width="1.6"/>
  <path d="M1716 286 l2.5 2.5 l2.5 -2.5" stroke="#6a6a6a"/>
  <rect x="1741.5" y="282.5" width="11" height="9"/>
  <circle cx="1771.5" cy="287" r="5"/>
  <rect x="1814" y="282" width="10.5" height="10"/>
  <path d="M1842 282 h4 l3 3 v8 h-7z"/>
 </g>
 <g fill="#a0a0a0">
  <path d="M1743 290.5 l3 -4 l2.5 2.5 l1.5 -1.5 l2 3z"/>
  <path d="M1767 291 l8 -8 q2 2 0.5 5 q-3 4 -8.5 3z"/>
  <path d="M1790 282 h11 v3 h-1 v-1.5 h-3.3 v8 h1.6 v1.5 h-5.6 v-1.5 h1.6 v-8 h-3.3 v1.5 h-1z"/>
  <rect x="1812.5" y="280.5" width="3" height="3"/><rect x="1823" y="280.5" width="3" height="3"/><rect x="1812.5" y="290.5" width="3" height="3"/><rect x="1823" y="290.5" width="3" height="3"/>
  <rect x="1839" y="288" width="6" height="6"/>
  <circle cx="1871" cy="284" r="3.3"/>
  <path d="M1745 315 l2.5 2.5 l2.5 -2.5" stroke="#6a6a6a" fill="none"/>
  <path d="M1864 315 l2.5 2.5 l2.5 -2.5 M1864 342 l2.5 2.5 l2.5 -2.5" stroke="#6a6a6a" fill="none"/>
 </g>
 <rect x="1868" y="286" width="6" height="10" rx="3" fill="#4a4a4a"/>
 <!-- lock row icons -->
 <g fill="#a8a8a8">
  <rect x="1679" y="336" width="11" height="11" fill="none" stroke="#a8a8a8" stroke-width="1"/>
  <rect x="1680" y="337" width="3" height="3"/><rect x="1686" y="337" width="3" height="3"/><rect x="1683" y="340" width="3" height="3"/><rect x="1680" y="343" width="3" height="3"/><rect x="1686" y="343" width="3" height="3"/>
  <path d="M1700.5 348 q0 -3 3 -3.5 l1.5 1.5 q-0.5 3 -4.5 2z M1704.5 344 l8 -8 l1 1 l-8 8z"/>
  <path d="M1728 334.5 l2.5 2.5 h-5z M1728 348.5 l2.5 -2.5 h-5z M1721 341.5 l2.5 -2.5 v5z M1735 341.5 l-2.5 -2.5 v5z"/>
  <rect x="1727.4" y="336" width="1.2" height="11"/><rect x="1722.5" y="340.9" width="11" height="1.2"/>
  <rect x="1767.5" y="340" width="10.5" height="8" rx="1"/>
 </g>
 <g fill="none" stroke="#a8a8a8" stroke-width="1.2">
  <path d="M1744 337.5 h12 v10 M1747 335 v12 h12" stroke-dasharray="2 1"/>
  <path d="M1769.5 340 v-2 q0 -3.5 3.2 -3.5 q3.2 0 3.2 3.5 v2"/>
 </g>
 <!-- layer row -->
 <path d="M1644 369.5 q6.5 -7 13 0 q-6.5 7 -13 0z" fill="#e8e8e8"/>
 <circle cx="1650.5" cy="369.5" r="2.5" fill="#4f4f4f"/>
 <g fill="none" stroke="#e8e8e8" stroke-width="1.2"><rect x="1876.5" y="369.5" width="10" height="7" rx="0.5"/><path d="M1878.5 369.5 v-2 q0 -3 3 -3 q3 0 3 3 v2"/></g>
 <rect x="1880.8" y="372" width="1.5" height="2" fill="#e8e8e8"/>
 <!-- layers bottom icons -->
 <g fill="none" stroke="#9a9a9a" stroke-width="1.4">
  <path d="M1721 1003.8 h-2 q-3 0 -3 2.8 q0 2.8 3 2.8 h2 M1725 1003.8 h2 q3 0 3 2.8 q0 2.8 -3 2.8 h-2 M1720 1006.6 h6"/>
  <path d="M1880.5 1003.5 h8 M1881.5 1003.5 v8.5 h6 v-8.5 M1883.5 1002 h2 M1883.5 1005 v5.5 M1885.5 1005 v5.5"/>
 </g>
 <text x="1744" y="1011" font-family="Liberation Serif" font-style="italic" font-size="13" fill="#8a8a8a">fx</text>
 <g fill="#e0e0e0">
  <rect x="1770" y="1001" width="13" height="10"/>
  <path d="M1824.7 1002.5 h5 v-1.3 h-5z M1824.7 1003 h12.6 v8 h-12.6z"/>
  <path d="M1813.8 1017 l-2 -2 h4z"/>
 </g>
 <circle cx="1776.5" cy="1006" r="2.8" fill="#3a3a3a"/>
 <circle cx="1804.5" cy="1006.5" r="5" fill="none" stroke="#e0e0e0" stroke-width="1.4"/>
 <path d="M1801 1010 l7 -7 q2 3.5 -0.5 6 q-2.5 2.5 -6.5 1z" fill="#e0e0e0"/>
 <path d="M1853.5 1002.5 h9 v9.5 h-6 l-3 -3z" fill="none" stroke="#e0e0e0" stroke-width="1.3"/>
 <rect x="1855" y="1004" width="3" height="3" fill="#e0e0e0"/>
</svg>


<!-- CHARACTER PANEL -->
<div class="a" style="left:1653px;top:571px;width:227px;height:304px;background:#535353;border:1px solid #3e3e3e;box-shadow:0 0 2px rgba(0,0,0,.35)"></div>
<div class="a" style="left:1654px;top:572px;width:225px;height:12px;background:#434343"></div>
<div class="a" style="left:1654px;top:584px;width:225px;height:29px;background:#474747"></div>
<div class="a" style="left:1654px;top:584px;width:45px;height:29px;background:#535353"></div>
<div class="a" style="left:1743px;top:585px;width:1px;height:28px;background:#3e3e3e"></div>
<div class="t" style="left:1665px;top:591px;color:#f0f0f0">字符</div>
<div class="t" style="left:1709px;top:591px;color:#c4c4c4">段落</div>
<div class="a" style="left:1662px;top:623px;width:120px;height:19px;background:#474747;border:1px solid #414141"></div>
<div class="a" style="left:1766px;top:624px;width:1px;height:17px;background:#5a5a5a"></div>
<div class="t" style="left:1665px;top:626px;font-size:11px;color:#f0f0f0">思源黑体 CN</div>
<div class="a" style="left:1792px;top:623px;width:75px;height:19px;background:#474747;border:1px solid #414141"></div>
<div class="a" style="left:1851px;top:624px;width:1px;height:17px;background:#5a5a5a"></div>
<div class="t" style="left:1797px;top:626px;font-size:11px;color:#f0f0f0">Heavy</div>
<div class="a" style="left:1678px;top:653px;width:83px;height:19px;background:#474747;border:1px solid #414141"></div>
<div class="a" style="left:1746px;top:654px;width:1px;height:17px;background:#5a5a5a"></div>
<div class="t" style="left:1680px;top:656px;font-size:11px;color:#f0f0f0">72 点</div>
<div class="a" style="left:1791px;top:653px;width:78px;height:19px;background:#474747;border:1px solid #414141"></div>
<div class="a" style="left:1853px;top:654px;width:1px;height:17px;background:#5a5a5a"></div>
<div class="t" style="left:1793px;top:656px;font-size:11px;color:#f0f0f0">72 点</div>
<div class="a" style="left:1678px;top:677px;width:83px;height:19px;background:#474747;border:1px solid #414141"></div>
<div class="a" style="left:1746px;top:678px;width:1px;height:17px;background:#5a5a5a"></div>
<div class="t" style="left:1680px;top:680px;font-size:11px;color:#f0f0f0">0</div>
<div class="a" style="left:1791px;top:677px;width:78px;height:19px;background:#474747;border:1px solid #414141"></div>
<div class="a" style="left:1853px;top:678px;width:1px;height:17px;background:#5a5a5a"></div>
<div class="t" style="left:1793px;top:680px;font-size:11px;color:#f0f0f0">0</div>
<div class="a" style="left:1679px;top:706px;width:79px;height:19px;background:#474747;border:1px solid #414141"></div>
<div class="a" style="left:1742px;top:707px;width:1px;height:17px;background:#5a5a5a"></div>
<div class="t" style="left:1681px;top:709px;font-size:11px;color:#f0f0f0">0%</div>
<div class="a" style="left:1679px;top:734px;width:54px;height:18px;background:#474747;border:1px solid #414141"></div>
<div class="t" style="left:1681px;top:737px;font-size:11px;color:#f0f0f0">100%</div>
<div class="a" style="left:1809px;top:734px;width:55px;height:18px;background:#474747;border:1px solid #414141"></div>
<div class="t" style="left:1811px;top:737px;font-size:11px;color:#f0f0f0">100%</div>
<div class="a" style="left:1679px;top:757px;width:54px;height:19px;background:#474747;border:1px solid #414141"></div>
<div class="t" style="left:1680px;top:760px;font-size:11px;color:#f0f0f0">0 点</div>
<div class="t" style="left:1774px;top:760px;font-size:11px;color:#e4e4e4">颜色：</div>
<div class="a" style="left:1809px;top:757px;width:56px;height:20px;background:#fff;border:1px solid #3a3a3a"></div>
<div class="a" style="left:1718px;top:787px;width:22px;height:22px;background:#333"></div>
<div class="a" style="left:1670px;top:819px;width:22px;height:21px;background:#333"></div>
<div class="a" style="left:1662px;top:851px;width:114px;height:19px;background:#474747;border:1px solid #414141"></div>
<div class="t" style="left:1670px;top:854px;font-size:11px;color:#f0f0f0">美国英语</div>
<div class="a" style="left:1802px;top:851px;width:66px;height:19px;background:#474747;border:1px solid #414141"></div>
<div class="t" style="left:1811px;top:854px;font-size:11px;color:#f0f0f0">锐利</div>
<svg width="1920" height="1028" style="left:0;top:0" viewBox="0 0 1920 1028">
 <path d="M1852 576.3 l-2.8 2.3 l2.8 2.3 M1856 576.3 l-2.8 2.3 l2.8 2.3" fill="none" stroke="#d8d8d8" stroke-width="1.5"/>
 <path d="M1868 575.5 l6 6 M1874 575.5 l-6 6" stroke="#d8d8d8" stroke-width="1.8"/>
 <g fill="#d0d0d0"><rect x="1863" y="595" width="10" height="1.1"/><rect x="1863" y="597.3" width="10" height="1.1"/><rect x="1863" y="599.6" width="10" height="1.1"/><rect x="1863" y="601.9" width="10" height="1.1"/></g>
 <g fill="none" stroke="#d4d4d4" stroke-width="1.2">
  <path d="M1771 630.5 l3.5 3.5 l3.5 -3.5 M1856 630.5 l3.5 3.5 l3.5 -3.5 M1751 660.5 l3.5 3.5 l3.5 -3.5 M1858 660.5 l3.5 3.5 l3.5 -3.5 M1751 684.5 l3.5 3.5 l3.5 -3.5 M1858 684.5 l3.5 3.5 l3.5 -3.5 M1747 713.5 l3.5 3.5 l3.5 -3.5 M1765 858.5 l3.5 3.5 l3.5 -3.5 M1855 858.5 l3.5 3.5 l3.5 -3.5"/>
 </g>
 <g font-family="Liberation Serif" fill="#e0e0e0" font-weight="bold">
  <text x="1657" y="671" font-size="9">T</text><text x="1663" y="670" font-size="17">T</text>
  <text x="1675" y="805" font-size="15">T</text>
  <text x="1700" y="805" font-size="15" font-style="italic" font-weight="normal">T</text>
  <text x="1719" y="805" font-size="14">TT</text>
  <text x="1744" y="805" font-size="14">T</text><text x="1753" y="805" font-size="9">T</text>
  <text x="1769" y="805" font-size="14">T</text><text x="1779" y="797" font-size="7">1</text>
  <text x="1794" y="805" font-size="14">T</text><text x="1803" y="806" font-size="7">1</text>
  <text x="1818" y="804" font-size="14">T</text>
  <text x="1842" y="805" font-size="14">T</text>
  <text x="1663" y="750" font-size="16">T</text>
  <text x="1790" y="748" font-size="16">T</text>
  <text x="1673" y="836" font-size="15">fi</text>
 </g>
 <g fill="#e0e0e0">
  <rect x="1818" y="806" width="13" height="1.2"/>
  <rect x="1841" y="798.5" width="14" height="1.2"/>
 </g>
 <g font-family="Liberation Serif" fill="#8c8c8c">
  <text x="1701" y="836" font-size="14" font-style="italic">σ</text>
  <text x="1722" y="836" font-size="14" font-weight="bold" fill="#e0e0e0">st</text>
  <text x="1745" y="836" font-size="15" font-style="italic">A</text>
  <text x="1768" y="836" font-size="13">aa</text>
  <text x="1796" y="836" font-size="14" font-style="italic">T</text>
  <text x="1817" y="836" font-size="14">1</text><text x="1825" y="830" font-size="8">st</text>
  <text x="1841" y="836" font-size="13">½</text>
 </g>
 <g font-family="Liberation Sans" fill="#d8d8d8">
  <text x="1656" y="692" font-size="11">V/A</text>
  <text x="1770" y="692" font-size="12" font-weight="bold" fill="#535353">VA</text>
  <text x="1656" y="772" font-size="12">A</text><text x="1664" y="766" font-size="8">a</text>
  <text x="1782" y="864" font-size="9">a</text><text x="1788" y="867" font-size="10">a</text>
 </g>
 <rect x="1770" y="678" width="18" height="12" fill="#d8d8d8"/>
 <text x="1771" y="689" font-family="Liberation Sans" font-size="12" font-weight="bold" fill="#535353">VA</text>
 <g fill="none" stroke="#d8d8d8" stroke-width="1">
  <path d="M1778 653 l-5 9 M1778 653 l5 9 M1774.5 659 h7 M1778 662.5 l-5 9 M1778 662.5 l5 9 M1774.5 668 h7 M1771 671.5 h15 M1771 662 v9"/>
  <path d="M1662 694 h12 M1662 694 l2 -2 M1662 694 l2 2"/>
  <path d="M1771 693 h17 M1771 693 l2 -2 M1771 693 l2 2 M1788 693 l-2 -2 M1788 693 l-2 2"/>
  <path d="M1660 707 v12 M1673 707 v12" stroke-dasharray="1.3 1"/>
  <path d="M1660 722 h13 M1660 722 l2 -1.5 M1673 722 l-2 -1.5" />
  <path d="M1659 737.5 v12.5 M1657 739.5 l2 -2 l2 2 M1657 748 l2 2 l2 -2" stroke-width="1.4"/>
  <path d="M1790 750 h16 M1790 750 l2 -2 M1790 750 l2 2 M1806 750 l-2 -2 M1806 750 l-2 2"/>
  <path d="M1669 766 v8 M1667 768 l2 -2 l2 2"/>
  <path d="M1657 773 h10"/>
 </g>
 <text x="1662" y="718" font-family="Liberation Sans" font-size="10" fill="#d8d8d8">あ</text>
</svg>

<!-- STATUS BAR -->
<div class="a" style="left:74px;top:1003px;width:1518px;height:17px;background:#484848"></div>
<div class="a" style="left:74px;top:1003px;width:231px;height:17px;background:#535353"></div>
<div class="a" style="left:0;top:1020px;width:1920px;height:8px;background:#dde6f1"></div>

<div class="a" style="left:74px;top:1003px;width:48px;height:17px;background:#4c4c4c"></div><div class="t" style="left:77px;top:1005px;font-size:11px;letter-spacing:0.6px;color:#e0e0e0">66.12%</div>
<div class="t" style="left:159px;top:1005px;font-size:11px;color:#d8d8d8">文档:5.93M/5.63M</div>
<svg width="10" height="14" style="left:293px;top:1005px" viewBox="0 0 10 14"><path d="M3 2.5 l4 4.5 l-4 4.5" fill="none" stroke="#c8c8c8" stroke-width="1.1"/></svg>
<!-- WATERMARK -->
<div class="t" style="left:1441px;top:943px;font-size:46px;line-height:60px;color:#000;-webkit-text-stroke:4px #000">头条</div>
<div class="t" style="left:1438px;top:940px;font-size:46px;line-height:60px;color:#fff;-webkit-text-stroke:4px #fff">头条</div>
<div class="t" style="left:1545px;top:943px;font-size:56px;line-height:60px;color:#000;-webkit-text-stroke:0.6px #000">@</div>
<div class="t" style="left:1542px;top:940px;font-size:56px;line-height:60px;color:#fff;-webkit-text-stroke:0.6px #fff">@</div>
<div class="t" style="left:1600px;top:943px;font-size:48px;line-height:60px;letter-spacing:1px;color:#000;-webkit-text-stroke:0.8px #000">花花平面设计</div>
<div class="t" style="left:1597px;top:940px;font-size:48px;line-height:60px;letter-spacing:1px;color:#fff;-webkit-text-stroke:0.8px #fff">花花平面设计</div>
</body></html>
